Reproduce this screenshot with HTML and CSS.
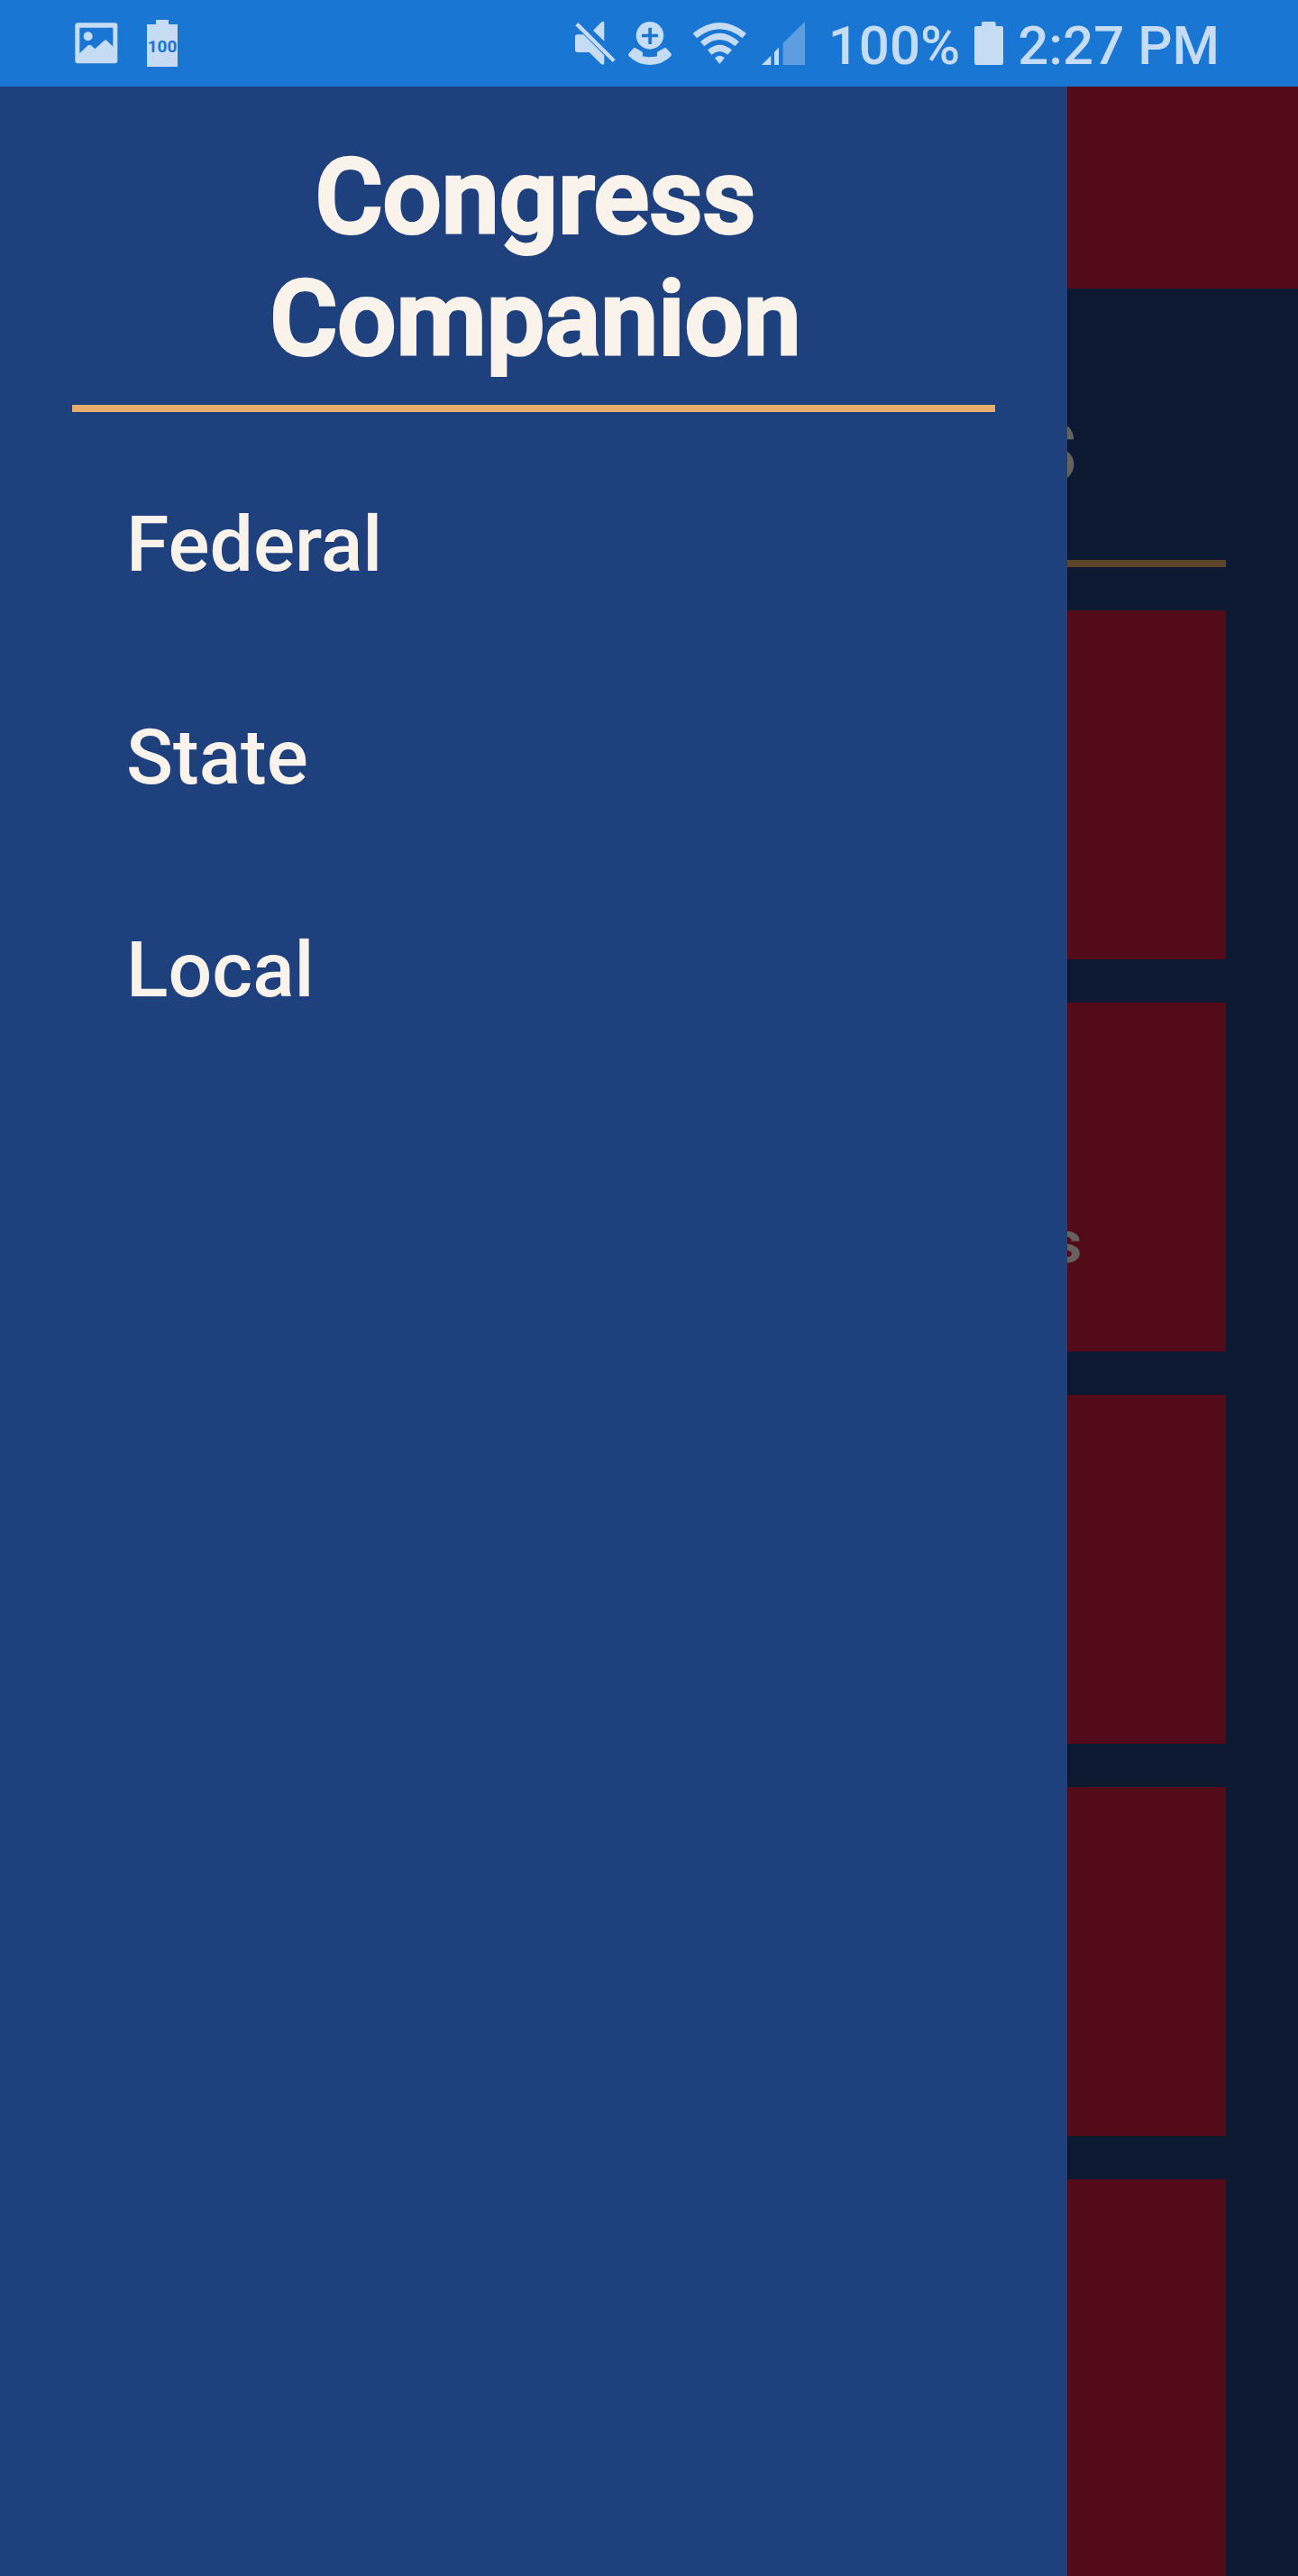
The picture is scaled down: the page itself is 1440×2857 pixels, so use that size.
FILE: index.html
```html
<!DOCTYPE html>
<html lang="en">
<head>
<meta charset="utf-8">
<meta name="viewport" content="width=device-width, initial-scale=1">
<title>Congress Companion</title>
<link rel="stylesheet" href="styles.css">
</head>
<body>
<div class="app">
  <header class="status-bar">
    <div class="status-group notifications">
      <svg width="48" height="46" viewBox="0 0 144 138" aria-hidden="true">
        <path fill-rule="evenodd" d="M11 1H132Q142 1 142 11V126Q142 136 132 136H11Q1 136 1 126V11Q1 1 11 1ZM16 17V102L44 76Q49 72 54 76L67 88L95 62Q102 55 109 62L127 80V17Z"/>
        <circle cx="44" cy="46" r="15"/>
      </svg>
      <svg width="34" height="52" viewBox="0 0 34 52" aria-hidden="true">
        <path d="M10 0H24V5H34V52H0V5H10Z"/>
        <text class="battery-level" x="17" y="36" text-anchor="middle">100</text>
      </svg>
    </div>
    <div class="status-group">
      <div class="status-icons">
        <svg width="59" height="48" viewBox="54 72 177 144" aria-hidden="true">
          <path d="M64 75L188 198L179 207L55 85Z"/>
          <path d="M114 101L141 74Q150 68 151 77V137Z"/>
          <path d="M62 115H82L151 184V210Q150 219 141 213L101 174H62Q54 174 54 166V123Q54 115 62 115Z"/>
        </svg>
        <svg width="71" height="48" viewBox="231 72 213 144" aria-hidden="true">
          <path fill-rule="evenodd" d="M303 72A46 46 0 1 1 302.900 72ZM298 92V113H276V124H298V147H309V124H330V113H309V92Z"/>
          <path d="M234 176L247 162Q251 157 257 161L277 172Q280 175 279 180V187Q303 193 327 187V180Q326 175 329 172L349 161Q355 157 359 162L372 176Q377 181 373 187Q344 216 303 216Q262 216 233 187Q229 181 234 176Z"/>
        </svg>
        <svg width="77" height="48" viewBox="444 72 231 144" aria-hidden="true">
          <path d="M446 111Q535 39 624 111L611 127Q535 66 459 127Z"/>
          <path d="M471 139Q535 82 600 139L586 154Q535 110 484 154Z"/>
          <path d="M495 166Q535 132 576 166L562 182Q535 160 508 182Z"/>
          <path d="M519 193Q535 178 552 193L535 213Z"/>
        </svg>
        <svg width="48" height="48" viewBox="675 72 144 144" aria-hidden="true">
          <path d="M675 216L706 185V216Z"/>
          <path d="M717 173L732 158V216H717Z"/>
          <path class="signal-empty" d="M746 144L819 72V216H746Z"/>
        </svg>
      </div>
      <div class="status-readout">
        <span class="status-text">100%</span>
        <svg width="32" height="48" viewBox="0 0 96 144" aria-hidden="true">
          <path d="M30 0H66Q71 0 71 6V15H90Q96 15 96 21V138Q96 144 90 144H6Q0 144 0 138V21Q0 15 6 15H24V6Q24 0 30 0Z"/>
        </svg>
        <time class="status-text">2:27 PM</time>
      </div>
    </div>
  </header>

  <div class="screen">
    <div class="app-bar"></div>
    <main class="content">
      <h2 class="page-title">s</h2>
      <div class="cards">
        <div class="card"></div>
        <div class="card">s</div>
        <div class="card"></div>
        <div class="card"></div>
        <div class="card"></div>
      </div>
    </main>
    <div class="scrim"></div>
    <aside class="drawer">
      <h1 class="drawer-title">Congress Companion</h1>
      <nav class="drawer-nav">
        <a href="#federal">Federal</a>
        <a href="#state">State</a>
        <a href="#local">Local</a>
      </nav>
    </aside>
  </div>
</div>
</body>
</html>
```
FILE: styles.css
```css
:root {
  --blue: #1e407c;
  --red: #cf1a3f;
  --cream: #f9f3ec;
  --gold: #e9ad6b;
  --status: #1976d2;
  --status-ink: #c5dcf4;
  --gutter: 80px;
}

* {
  box-sizing: border-box;
}

body {
  margin: 0;
  font-family: Roboto, "Liberation Sans", sans-serif;
  font-weight: 500;
  color: var(--cream);
}

.app {
  display: flex;
  flex-direction: column;
  height: 100vh;
  overflow: hidden;
}

/* Status bar */

.status-bar {
  flex: none;
  display: flex;
  justify-content: space-between;
  height: 96px;
  padding: 0 87px 0 83px;
  background: var(--status);
  color: var(--status-ink);
  fill: var(--status-ink);
}

.status-bar svg {
  display: block;
  flex: none;
}

.status-group,
.status-icons,
.status-readout {
  display: flex;
  align-items: center;
}

.status-group {
  gap: 26px;
}

.notifications {
  gap: 32px;
}

.status-readout {
  gap: 16px;
}

.status-text {
  padding-top: 5px;
  font-size: 60px;
  line-height: 91px;
  white-space: nowrap;
}

.battery-level {
  font-size: 19px;
  font-weight: 700;
  fill: var(--status);
}

.signal-empty {
  opacity: 0.4;
}

/* Page behind the drawer */

.screen {
  position: relative;
  flex: 1;
  min-height: 0;
  display: flex;
  flex-direction: column;
  overflow: hidden;
  background: var(--blue);
}

.app-bar {
  flex: none;
  height: 224px;
  background: var(--red);
}

.content {
  flex: 1;
  display: flex;
  flex-direction: column;
  padding: 96px var(--gutter) 0;
}

.page-title {
  margin: 0 0 48px;
  padding: 0 164px 55px 0;
  border-bottom: 8px solid var(--gold);
  font-size: 128px;
  font-weight: 700;
  line-height: 150px;
  text-align: right;
}

.cards {
  flex: 1;
  display: flex;
  flex-direction: column;
  gap: 48px;
}

.card {
  flex: none;
  display: flex;
  align-items: flex-end;
  justify-content: flex-end;
  height: 387px;
  padding: 0 160px 82px 0;
  background: var(--red);
  font-size: 64px;
  font-weight: 700;
  line-height: 76px;
}

.card:last-child {
  flex: 1;
}

.scrim {
  position: absolute;
  inset: 0;
  background: rgba(0, 0, 0, 0.6);
}

/* Drawer */

.drawer {
  position: absolute;
  inset: 0 256px 0 0;
  padding: 55px var(--gutter) 0;
  background: var(--blue);
}

.drawer-title {
  margin: 0;
  padding: 0 156px 28px 160px;
  border-bottom: 8px solid var(--gold);
  font-size: 115px;
  font-weight: 500;
  line-height: 135px;
  text-align: center;
  -webkit-text-stroke: 4px var(--cream);
}

.drawer-nav {
  display: flex;
  flex-direction: column;
  padding: 29px 60px;
}

.drawer-nav a {
  color: inherit;
  font-size: 86px;
  line-height: 236px;
  text-decoration: none;
}
```
